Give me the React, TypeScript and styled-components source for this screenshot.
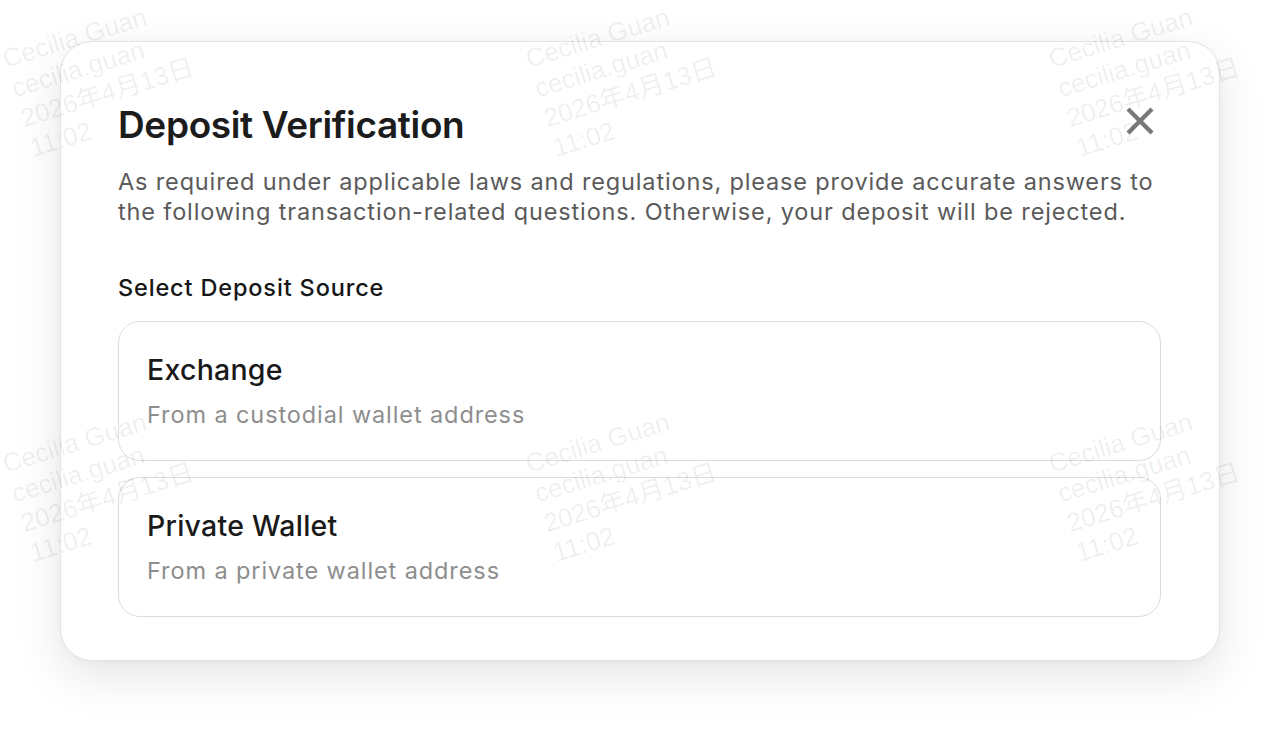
import React from "react";
import styled, { createGlobalStyle } from "styled-components";

const GlobalStyle = createGlobalStyle`
  html, body {
    margin: 0;
    padding: 0;
    background: #ffffff;
  }
  body {
    font-family: Inter, "Noto Sans", "Liberation Sans", sans-serif;
    -webkit-font-smoothing: antialiased;
  }
`;

const Page = styled.div`
  position: relative;
  width: 1280px;
  height: 739px;
  overflow: hidden;
  background: #ffffff;
  padding-top: 41px;
  box-sizing: border-box;
`;

const Modal = styled.div`
  margin: 0 60px;
  width: 1160px;
  height: 620px;
  box-sizing: border-box;
  background: #ffffff;
  border: 1px solid #e3e3e3;
  border-radius: 32px;
  box-shadow: 0 16px 48px rgba(0, 0, 0, 0.1), 0 2px 8px rgba(0, 0, 0, 0.03);
  padding: 61px 58px 44px 57px;
  display: flex;
  flex-direction: column;
`;

const Header = styled.div`
  display: flex;
  align-items: center;
  justify-content: space-between;
`;

const Title = styled.h1`
  margin: 0;
  font-size: 37px;
  line-height: 44px;
  font-weight: 600;
  color: #1c1c1c;
  letter-spacing: -0.35px;
`;

const CloseButton = styled.button`
  width: 40px;
  height: 40px;
  border: none;
  background: transparent;
  padding: 0;
  margin-top: -8px;
  margin-right: 1px;
  display: flex;
  align-items: center;
  justify-content: center;
  cursor: pointer;
`;

const Description = styled.p`
  margin: 20px 0 0 0;
  font-size: 23.5px;
  line-height: 30px;
  font-weight: 400;
  color: #5a5a5a;
  letter-spacing: 0.85px;
`;

const Label = styled.div`
  margin-top: 46px;
  font-size: 23.5px;
  line-height: 30px;
  font-weight: 500;
  color: #161616;
  letter-spacing: 0.85px;
`;

const OptionList = styled.div`
  margin-top: 18px;
  display: flex;
  flex-direction: column;
  gap: 16px;
`;

const OptionCard = styled.div`
  box-sizing: border-box;
  height: 140px;
  flex: 0 0 140px;
  border: 1.5px solid #dcdcdc;
  border-radius: 22px;
  padding: 30px 28px 0 28px;
  display: flex;
  flex-direction: column;
  gap: 12px;
  background: #ffffff;
`;

const OptionTitle = styled.div`
  font-size: 28.5px;
  line-height: 36px;
  font-weight: 500;
  color: #1a1a1a;
  letter-spacing: 0.25px;
`;

const OptionSub = styled.div`
  font-size: 23.5px;
  line-height: 30px;
  font-weight: 400;
  color: #8e8e8e;
  letter-spacing: 0.9px;
`;

const WatermarkLayer = styled.div`
  position: absolute;
  inset: 0;
  pointer-events: none;
  z-index: 10;
`;

const Watermark = styled.div`
  position: absolute;
  transform: rotate(-17deg);
  transform-origin: 0 0;
  font-family: "Liberation Sans", "Noto Sans CJK SC", sans-serif;
  font-size: 26px;
  line-height: 31px;
  color: rgba(0, 0, 0, 0.07);
  white-space: nowrap;
`;

const marks = [
  { x: -1, y: 45 },
  { x: 522, y: 45 },
  { x: 1045, y: 45 },
  { x: -1, y: 450 },
  { x: 522, y: 450 },
  { x: 1045, y: 450 },
];

const options = [
  { title: "Exchange", sub: "From a custodial wallet address" },
  { title: "Private Wallet", sub: "From a private wallet address" },
];

export default function App() {
  return (
    <>
      <GlobalStyle />
      <Page>
        <Modal>
          <Header>
            <Title>Deposit Verification</Title>
            <CloseButton aria-label="Close">
              <svg width="28" height="28" viewBox="0 0 28 28">
                <path
                  d="M2 2 L26 26 M26 2 L2 26"
                  stroke="#787878"
                  strokeWidth="4.3"
                  strokeLinecap="butt"
                  fill="none"
                />
              </svg>
            </CloseButton>
          </Header>
          <Description>
            As required under applicable laws and regulations, please provide accurate answers to
            the following transaction-related questions. Otherwise, your deposit will be rejected.
          </Description>
          <Label>Select Deposit Source</Label>
          <OptionList>
            {options.map((o) => (
              <OptionCard key={o.title}>
                <OptionTitle>{o.title}</OptionTitle>
                <OptionSub>{o.sub}</OptionSub>
              </OptionCard>
            ))}
          </OptionList>
        </Modal>
        <WatermarkLayer>
          {marks.map((m, i) => (
            <Watermark key={i} style={{ left: m.x, top: m.y }}>
              Cecilia Guan
              <br />
              cecilia.guan
              <br />
              2026年4月13日
              <br />
              11:02
            </Watermark>
          ))}
        </WatermarkLayer>
      </Page>
    </>
  );
}
